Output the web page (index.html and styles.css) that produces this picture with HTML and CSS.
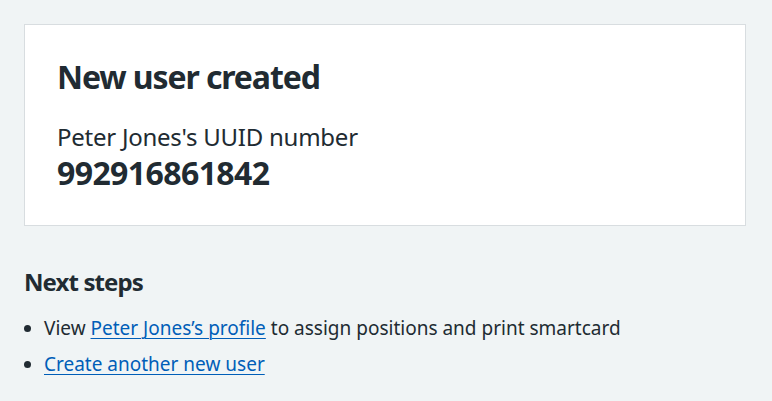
FILE: index.html
```html
<!DOCTYPE html>
<html lang="en">
<head>
<meta charset="utf-8">
<title>New user created</title>
<link rel="stylesheet" href="styles.css">
</head>
<body>
<main class="page">
  <div class="panel">
    <h1 class="panel-title">New user created</h1>
    <p class="panel-label">Peter Jones's UUID number</p>
    <p class="panel-number">992916861842</p>
  </div>
  <h2 class="section-title">Next steps</h2>
  <ul class="steps">
    <li>View <a href="#">Peter Jones’s profile</a> to assign positions and print smartcard</li>
    <li><a href="#">Create another new user</a></li>
  </ul>
</main>
</body>
</html>
```
FILE: styles.css
```css
html, body {
  margin: 0;
  padding: 0;
  background: #f0f4f5;
}
body {
  font-family: "Noto Sans", "Open Sans", Arial, sans-serif;
  color: #212b32;
  -webkit-font-smoothing: antialiased;
}
.page {
  padding: 24px 26px 24px 24px;
}
.panel {
  background: #ffffff;
  border: 1px solid #d8dde0;
  padding: 32px;
}
.panel-title {
  margin: 0 0 24px;
  font-size: 32px;
  line-height: 40px;
  font-weight: 700;
  letter-spacing: -1.1px;
}
.panel-label {
  margin: 0;
  font-size: 24px;
  line-height: 32px;
  font-weight: 400;
  letter-spacing: -0.25px;
}
.panel-number {
  margin: 0;
  font-size: 32px;
  line-height: 40px;
  font-weight: 700;
  letter-spacing: -0.6px;
}
.section-title {
  margin: 40px 0 16px;
  font-size: 24px;
  line-height: 32px;
  font-weight: 700;
  letter-spacing: -0.9px;
}
.steps {
  margin: 0;
  padding-left: 20px;
  font-size: 19px;
  line-height: 28px;
}
.steps li {
  margin-bottom: 8px;
}
.steps a {
  color: #005eb8;
  text-decoration: underline;
  text-underline-offset: 3px;
  text-decoration-thickness: 1px;
}
```
